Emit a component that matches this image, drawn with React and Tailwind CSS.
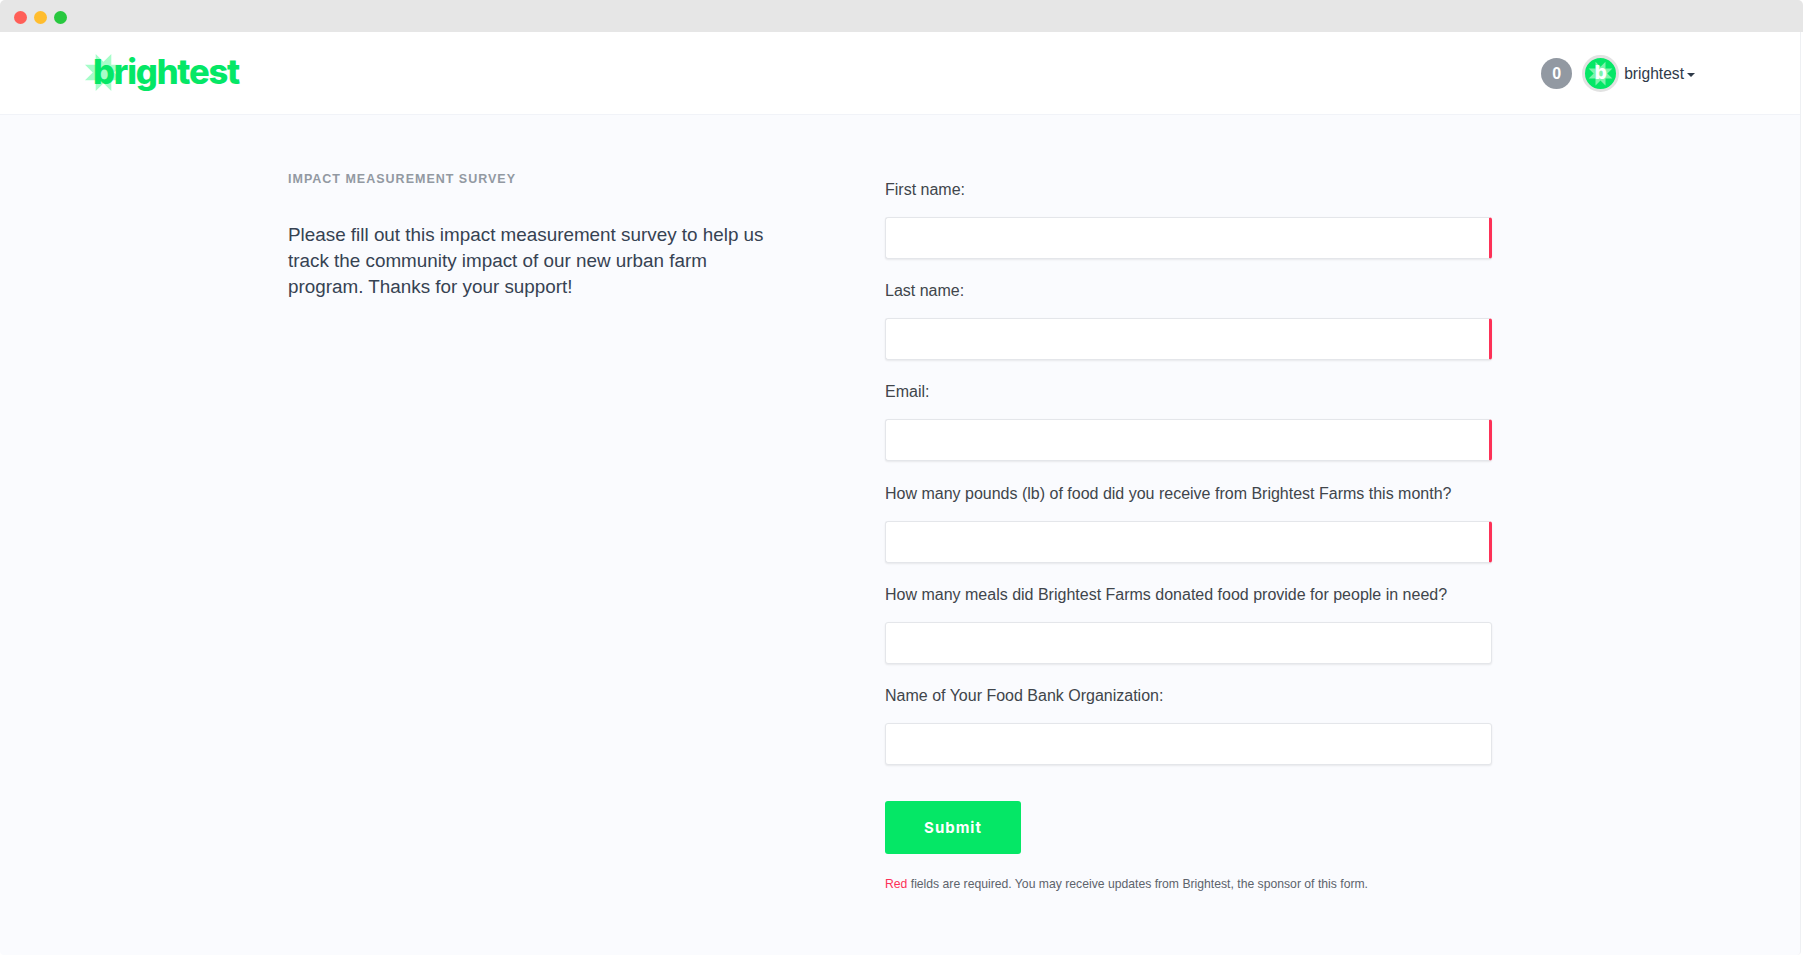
const fields = [
  { label: 'First name:', required: true },
  { label: 'Last name:', required: true },
  { label: 'Email:', required: true },
  { label: 'How many pounds (lb) of food did you receive from Brightest Farms this month?', required: true },
  { label: 'How many meals did Brightest Farms donated food provide for people in need?', required: false },
  { label: 'Name of Your Food Bank Organization:', required: false },
];

const helvetica = "font-['Liberation_Sans',Arial,sans-serif]";

const Sun = ({ className, color }) => (
  <svg viewBox="0 0 40 40" className={className} fill={color}>
    <polygon points="20,9 28,1 28,12 39,12 31,20 39,28 28,28 28,39 20,31 12,39 12,28 1,28 9,20 1,12 12,12 12,1" />
  </svg>
);

const Header = () => (
  <header className="h-[83px] bg-white border-b border-[#f1f3f8] flex items-center justify-between pl-[84px] pr-[105px]">
    <div className="relative h-[40px] w-[160px] flex items-center">
      <Sun className="absolute left-0 top-[0px] w-[39px] h-[39px]" color="#a6fdc9" />
      <span className="relative ml-[9px] mt-[-2px] text-[34.5px] leading-none font-extrabold tracking-[-1.2px] text-[#05e766] font-['Inter',sans-serif]">
        brightest
      </span>
    </div>
    <div className={`flex items-center mt-[1px] ${helvetica}`}>
      <span className="w-[31px] h-[31px] rounded-full bg-[#9299a2] text-white text-[16px] font-bold flex items-center justify-center">
        0
      </span>
      <span className="relative ml-[10px] w-[37px] h-[37px] rounded-full border-[3px] border-[#e2e2e2] bg-[#05e766] flex items-center justify-center">
        <Sun className="absolute left-[3px] top-[3px] w-[25px] h-[25px]" color="#7ef3ac" />
        <span className="relative text-white text-[19px] leading-none font-extrabold font-['Inter',sans-serif] mt-[-3px]">b</span>
      </span>
      <span className="ml-[5px] text-[15.6px] text-[#2f3a49]">brightest</span>
      <span className="ml-[3px] mt-[2px] w-0 h-0 border-x-[4px] border-x-transparent border-t-[4px] border-t-[#2f3a49]" />
    </div>
  </header>
);

const Field = ({ label, required }) => (
  <div className="h-[101.2px]">
    <label className="block h-[42px] pt-[5px] text-[16px] leading-[20px] text-[#40454b]">{label}</label>
    <div className={`h-[42px] rounded-[3px] bg-white border border-[#e4e6ea] shadow-[0_1px_2px_rgba(0,0,0,0.08)] ${required ? 'border-r-[3px] border-r-[#fd3157]' : ''}`} />
  </div>
);

export default function App() {
  return (
    <div className={`h-[955px] w-[1803px] bg-white overflow-hidden ${helvetica}`}>
      <div className="h-[32px] bg-[#e6e6e6] rounded-t-[5px] flex items-center gap-[7px] pl-[14px] pt-[2px]">
        <span className="w-[13px] h-[13px] rounded-full bg-[#ff5f58]" />
        <span className="w-[13px] h-[13px] rounded-full bg-[#ffbd2e]" />
        <span className="w-[13px] h-[13px] rounded-full bg-[#28c83f]" />
      </div>
      <div className="w-[1801px] h-[923px] rounded-b-[4px] bg-[#fafbfe] border-r border-[#eef0f3]">
        <Header />
        <main className="flex pl-[288px]">
          <section className="w-[597px] pt-[56px]">
            <h2 className="text-[12.5px] leading-[16px] font-bold tracking-[1px] text-[#9299a2]">IMPACT MEASUREMENT SURVEY</h2>
            <p className="mt-[35px] w-[490px] text-[18.85px] leading-[26px] text-[#364252]">
              Please fill out this impact measurement survey to help us track the community impact of our new urban farm program. Thanks for your support!
            </p>
          </section>
          <form className="w-[607px] pt-[60px]">
            {fields.map(({ label, required }, key) => (
              <Field key={key} label={label} required={required} />
            ))}
            <button type="button" className="mt-[19px] pt-[1px] w-[136px] h-[53px] rounded-[3px] bg-[#05e766] text-white text-[15px] font-bold tracking-[1px] font-['Inter',sans-serif]">
              Submit
            </button>
            <p className="mt-[21px] text-[12.2px] leading-[18px] text-[#5d636c]">
              <span className="text-[#fd3157]">Red</span> fields are required. You may receive updates from Brightest, the sponsor of this form.
            </p>
          </form>
        </main>
      </div>
    </div>
  );
}
